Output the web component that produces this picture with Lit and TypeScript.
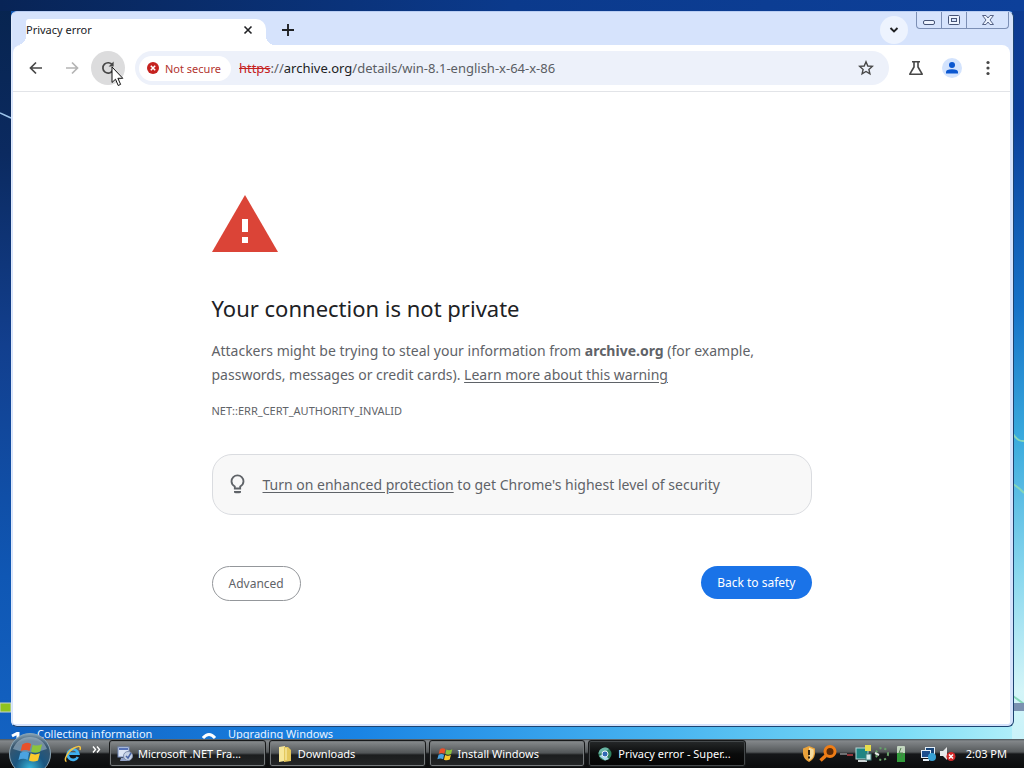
import { LitElement, html, svg, css } from "lit";
import { customElement } from "lit/decorators.js";

const flag = svg`
  <path d="M3 5 Q7 2 11 4.500 L9.600 11 Q6 9 1.500 11Z" fill="#e8502a"/>
  <path d="M12.500 5.200 Q16.500 7 21 4.800 L19.300 11.400 Q15 13.500 11 11.500Z" fill="#8cc43c"/>
  <path d="M1.200 12.500 Q5.500 10.500 9.200 12.600 L7.800 19 Q4 17 -.5 19Z" fill="#4ba3e0"/>
  <path d="M10.600 13 Q14.500 15 19 13 L17.300 19.500 Q13 21.500 9 19.600Z" fill="#fbc92c"/>`;

@customElement("browser-window")
export class BrowserWindow extends LitElement {
  static styles = css`
    :host {
      display: flex;
      flex-direction: column;
      min-height: 0;
      background: #d6e3fc;
      border: 1px solid #1c4371;
      border-top-color: #b9cdf2;
      border-left-color: #dfeafb;
      border-radius: 6px;
      padding: 0 3px 2px 1px;
      box-sizing: border-box;
      font-family: "Noto Sans", "Open Sans", sans-serif;
      color: #202124;
      position: relative;
    }
    button {
      font: inherit;
      color: inherit;
      border: 0;
      background: none;
      padding: 0;
      display: grid;
      place-items: center;
      flex: none;
    }
    svg { display: block; }
    .tabs { display: flex; height: 33px; flex: none; padding-left: 13px; }
    .tab {
      box-sizing: border-box;
      width: 240px;
      height: 26px;
      margin-top: 7px;
      background: #fff;
      border-radius: 3px 10px 0 0;
      display: flex;
      align-items: center;
      justify-content: space-between;
      padding: 0 10px 4px 0;
      font-size: 11px;
      line-height: 16px;
      position: relative;
    }
    .tab::before, .tab::after {
      content: "";
      position: absolute;
      bottom: 0;
      width: 9px;
      height: 9px;
    }
    .tab::before { right: 100%; background: radial-gradient(circle at 0 0, transparent 9px, #fff 9px); }
    .tab::after { left: 100%; background: radial-gradient(circle at 100% 0, transparent 9px, #fff 9px); }
    .close { width: 16px; height: 16px; }
    .plus { width: 24px; height: 24px; margin: 6px 0 0 10px; }
    .search { width: 28px; height: 28px; margin: 4px 8px 0 auto; border-radius: 50%; background: #edf3fe; }
    .caption {
      display: flex;
      height: 17px;
      box-sizing: border-box;
      border: 1px solid #7c8fb5;
      border-top: 0;
      border-radius: 0 0 4px 4px;
      margin-right: 1px;
    }
    .caption button { width: 25px; border-right: 1px solid #7c8fb5; }
    .caption button:last-child { width: 41px; border: 0; }
    .toolbar {
      display: flex;
      align-items: center;
      height: 46px;
      flex: none;
      background: #fff;
      border-bottom: 1px solid #e2e4e8;
      border-radius: 8px 8px 0 0;
      padding: 0 5px 0 6px;
      gap: 2px;
    }
    .icon { width: 34px; height: 34px; border-radius: 50%; color: #474747; }
    .off { color: #b4b4b4; }
    .hover { background: #dcdcdd; }
    .address {
      flex: 1;
      min-width: 0;
      height: 34px;
      margin: 0 8px 0 8px;
      border-radius: 17px;
      background: #edf1fa;
      display: flex;
      align-items: center;
      font-size: 13px;
    }
    .chip {
      height: 25px;
      margin-left: 4px;
      padding: 0 10px 0 8px;
      border-radius: 13px;
      background: #fff;
      color: #b3352f;
      display: flex;
      align-items: center;
      gap: 6px;
      font-size: 11px;
    }
    .url { flex: 1; margin-left: 8px; white-space: nowrap; overflow: hidden; color: #5a5d63; }
    .url s { color: #c5221f; }
    .url b { font-weight: 400; color: #202124; }
    .star { width: 34px; height: 34px; margin-right: 6px; }
    .page { flex: 1; min-height: 0; background: #fff; overflow: hidden; border-radius: 0 0 2px 2px; }
    .warning {
      box-sizing: border-box;
      width: min(600px, 100% - 48px);
      margin: 0 auto;
      padding-top: 97px;
      color: #5f6368;
      font-size: 14px;
      line-height: 24px;
    }
    .alert { margin: 6px 0 0; }
    h1 { margin: 41px 0 16px; font-size: 22px; line-height: 30px; font-weight: 400; color: #202124; }
    p { margin: 0; }
    a { color: inherit; text-underline-offset: 2px; }
    .code { margin-top: 12px; font-size: 11px; }
    .tip {
      box-sizing: border-box;
      min-height: 61px;
      margin-top: 31px;
      padding: 0 16px;
      border: 1px solid #dadce0;
      border-radius: 20px;
      background: #f8f8f8;
      display: flex;
      align-items: center;
      gap: 17px;
    }
    .actions { display: flex; justify-content: space-between; margin-top: 51px; font-size: 12px; }
    .actions button { height: 33px; padding: 0 16px; border-radius: 18px; }
    .actions .more { height: 35px; border: 1px solid #94979b; }
    .actions .safe { background: #1a73e8; color: #fff; }
    .cursor { position: absolute; left: 99px; top: 54px; }
  `;

  render() {
    return html`
      <div class="tabs">
        <div class="tab">
          <span>Privacy error</span>
          <button class="close" aria-label="Close tab">
            <svg width="10" height="10" viewBox="0 0 10 10"><path d="M1.500 1.500 8.500 8.500M8.500 1.500 1.500 8.500" stroke="#202124" stroke-width="1.600"/></svg>
          </button>
        </div>
        <button class="plus" aria-label="New tab">
          <svg width="14" height="14" viewBox="0 0 14 14"><path d="M7 1V13M1 7H13" stroke="#202124" stroke-width="1.900"/></svg>
        </button>
        <button class="search" aria-label="Search tabs">
          <svg width="10" height="8" viewBox="0 0 10 8"><path d="M1.500 2 5 5.500 8.500 2" fill="none" stroke="#202124" stroke-width="1.900"/></svg>
        </button>
        <div class="caption">
          <button aria-label="Minimize"><svg width="14" height="14" viewBox="0 0 14 14"><rect x="1.500" y="7.500" width="11" height="4" rx="1.500" fill="#edf3fe" stroke="#465476"/></svg></button>
          <button aria-label="Maximize"><svg width="14" height="14" viewBox="0 0 14 14"><rect x="1.500" y="2.500" width="11" height="9" rx="1" fill="#edf3fe" stroke="#465476"/><rect x="4.500" y="5.500" width="5" height="3" fill="#d6e3fc" stroke="#465476"/></svg></button>
          <button aria-label="Close"><svg width="14" height="12" viewBox="0 0 14 12"><path d="M1.500 1.500H5L7 4 9 1.500H12.500L9 6 12.500 10.500H9L7 8 5 10.500H1.500L5 6Z" fill="#edf3fe" stroke="#566386"/></svg></button>
        </div>
      </div>
      <div class="toolbar">
        <button class="icon" aria-label="Back"><svg width="16" height="16" viewBox="0 0 16 16"><path d="M14 8H3M8 2.500 2.500 8 8 13.500" fill="none" stroke="currentColor" stroke-width="1.700"/></svg></button>
        <button class="icon off" aria-label="Forward"><svg width="16" height="16" viewBox="0 0 16 16"><path d="M2 8H13M8 2.500 13.500 8 8 13.500" fill="none" stroke="currentColor" stroke-width="1.700"/></svg></button>
        <button class="icon hover" aria-label="Reload"><svg width="16" height="16" viewBox="0 0 16 16"><path d="M12.800 10.200A5.200 5.200 0 1 1 12.400 5" fill="none" stroke="currentColor" stroke-width="1.700"/><path d="M13.600 1.500V6.500H8.600Z" fill="currentColor"/></svg></button>
        <div class="address">
          <button class="chip">
            <svg width="12" height="12" viewBox="0 0 12 12"><circle cx="6" cy="6" r="6" fill="#c5221f"/><path d="M3.800 3.800 8.200 8.200M8.200 3.800 3.800 8.200" stroke="#fff" stroke-width="1.500"/></svg>
            Not secure
          </button>
          <span class="url"><s>https</s>://<b>archive.org</b>/details/win-8.1-english-x-64-x-86</span>
          <button class="star" aria-label="Bookmark this tab"><svg width="16" height="16" viewBox="0 0 16 16"><path d="M8 1.800 9.800 6 14.300 6.400 10.900 9.400 11.900 13.800 8 11.500 4.100 13.800 5.100 9.400 1.700 6.400 6.200 6Z" fill="none" stroke="#474747" stroke-width="1.400"/></svg></button>
        </div>
        <button class="icon" aria-label="Experiments"><svg width="16" height="16" viewBox="0 0 16 16"><path d="M4 1.800H12M6 2V7L1.800 14.200H14.200L10 7V2" fill="none" stroke="currentColor" stroke-width="1.600" stroke-linejoin="round"/></svg></button>
        <button class="icon" aria-label="Profile"><svg width="20" height="20" viewBox="0 0 20 20"><circle cx="10" cy="10" r="10" fill="#d3e3fd"/><circle cx="10" cy="7" r="3" fill="#0b57d0"/><path d="M4 15.500V14Q4 11.200 10 11.200T16 14V15.500Z" fill="#0b57d0"/></svg></button>
        <button class="icon" aria-label="Menu"><svg width="16" height="16" viewBox="0 0 16 16"><g fill="currentColor"><circle cx="8" cy="2.500" r="1.600"/><circle cx="8" cy="8" r="1.600"/><circle cx="8" cy="13.500" r="1.600"/></g></svg></button>
      </div>
      <main class="page">
        <div class="warning">
          <svg class="alert" width="66" height="57" viewBox="0 0 66 57"><path d="M33 0 66 57H0Z" fill="#db4437"/><path d="M30 24H36V37H30ZM30 42H36V48H30Z" fill="#fff"/></svg>
          <h1>Your connection is not private</h1>
          <p>Attackers might be trying to steal your information from <strong>archive.org</strong> (for example, passwords, messages or credit cards). <a href="#">Learn more about this warning</a></p>
          <p class="code">NET::ERR_CERT_AUTHORITY_INVALID</p>
          <div class="tip">
            <svg width="17" height="22" viewBox="0 0 17 22"><path d="M5.800 14.500V12.500Q2.500 10.600 2.500 7.300A6 6 0 0 1 14.500 7.300Q14.500 10.600 11.200 12.500V14.500Z" fill="none" stroke="#5f6368" stroke-width="1.800"/><path d="M5 17H12V18.200Q12 19.300 10 19.300H7Q5 19.300 5 18.200Z" fill="#5f6368"/></svg>
            <p><a href="#">Turn on enhanced protection</a> to get Chrome's highest level of security</p>
          </div>
          <div class="actions">
            <button class="more">Advanced</button>
            <button class="safe">Back to safety</button>
          </div>
        </div>
      </main>
      <svg class="cursor" width="14" height="21" viewBox="0 0 14 21"><path d="M1 1V16.500L4.500 13.200 7.200 19.500 9.600 18.400 6.900 12.300H11.800Z" fill="#fff" stroke="#111"/></svg>
    `;
  }
}

@customElement("task-bar")
export class TaskBar extends LitElement {
  static styles = css`
    :host {
      display: flex;
      align-items: center;
      height: 29px;
      background: linear-gradient(#4b5358 0, #83878a 2px, #55595b 13px, #151719 15px, #0b0c0d);
      color: #fff;
      font: 11px/16px "Noto Sans", "Open Sans", sans-serif;
      box-sizing: border-box;
      padding: 0 17px 0 8px;
    }
    button { font: inherit; color: inherit; border: 0; padding: 0; background: none; }
    svg { display: block; flex: none; }
    .start { height: 42px; margin-top: -7px; align-self: flex-start; position: relative; }
    .quick { display: flex; align-items: center; gap: 10px; margin: 0 8px 0 12px; }
    .chev { align-self: flex-start; }
    .tasks { display: flex; gap: 3px; flex: 1; min-width: 0; max-width: 637px; }
    .task {
      flex: 1;
      min-width: 0;
      height: 27px;
      box-sizing: border-box;
      display: flex;
      align-items: center;
      gap: 5px;
      padding-left: 7px;
      border: 1px solid #17191a;
      border-radius: 3px;
      box-shadow: inset 0 0 0 1px #75797b;
      background: linear-gradient(#888c8e, #515557 12px, #1b1d1e 14px, #242627);
      white-space: nowrap;
      overflow: hidden;
    }
    .active { padding-left: 8px; background: linear-gradient(#26292a, #0a0b0b 13px, #050505); box-shadow: inset 0 0 0 1px #44484a; }
    .tray { display: flex; align-items: center; gap: 2px; margin-left: auto; }
    .net { margin-left: 8px; }
    .battery { margin: 0 1px; }
    time { margin-left: 8px; white-space: nowrap; }
  `;

  render() {
    return html`
      <button class="start" aria-label="Start">
        <svg width="44" height="42" viewBox="0 0 44 42">
          <defs><radialGradient id="orb" cx=".5" cy=".85" r=".9"><stop offset="0" stop-color="#37b4d8"/><stop offset=".4" stop-color="#1b5680"/><stop offset=".75" stop-color="#38566e"/><stop offset="1" stop-color="#a4bccb"/></radialGradient></defs>
          <circle cx="22" cy="22" r="20.500" fill="url(#orb)" stroke="#8aa5b5"/>
          <path d="M5 17A18 18 0 0 1 39 17Q22 24 5 17Z" fill="#d5e4ef" opacity=".4"/>
          <g transform="translate(11 7) scale(1.1)">${flag}</g>
        </svg>
      </button>
      <div class="quick">
        <svg width="18" height="18" viewBox="0 0 18 18"><path d="M13.800 12A5.300 5.300 0 1 1 14.300 8.700H5" fill="none" stroke="#3fb0ee" stroke-width="2.700"/><path d="M2.500 16.500C-1 15.500 4 6 10 3S17 1.500 16 5" fill="none" stroke="#f5c542" stroke-width="1.500"/></svg>
        <svg class="chev" width="9" height="9" viewBox="0 0 9 9"><path d="M1 1.500 3.500 4.500 1 7.500M5 1.500 7.500 4.500 5 7.500" fill="none" stroke="#fff" stroke-width="1.400"/></svg>
      </div>
      <div class="tasks">
        <button class="task">
          <svg width="16" height="16" viewBox="0 0 16 16"><rect x="1" y="1" width="11" height="10" fill="#dbe4f4" stroke="#7187b8"/><rect x="2" y="2" width="9" height="2" fill="#5672b8"/><path d="M4 12H10V15H3Z" fill="#93a3c8"/><circle cx="11" cy="10" r="4.500" fill="#c6d2e6" stroke="#7f8fae"/><path d="M9 10 11 12 14 7" fill="none" stroke="#4b66a6" stroke-width="1.500"/></svg>
          <span>Microsoft .NET Fra...</span>
        </button>
        <button class="task">
          <svg width="16" height="16" viewBox="0 0 16 16"><path d="M2 1 8 0V15L2 16Z" fill="#f7e79a"/><path d="M7 1H11L14 4V15L7 16Z" fill="#e4c85e"/><path d="M9 2V14" stroke="#fff4b8"/></svg>
          <span>Downloads</span>
        </button>
        <button class="task">
          <svg width="16" height="16" viewBox="-1 1 23 21">${flag}</svg>
          <span>Install Windows</span>
        </button>
        <button class="task active">
          <svg width="16" height="16" viewBox="0 0 16 16"><circle cx="8" cy="8" r="6.500" fill="#2f7f5c"/><path d="M1.500 8A6.500 6.500 0 0 1 12 3L8 6Z" fill="#6ab5a5"/><path d="M2 10 8 14.500 12 13 7 8Z" fill="#a9d9ec"/><circle cx="8" cy="8" r="3" fill="#3169b5" stroke="#e7f4f8"/></svg>
          <span>Privacy error - Super...</span>
        </button>
      </div>
      <div class="tray">
        <svg width="16" height="16" viewBox="0 0 16 16"><path d="M8 0 14 2.500V8Q13 13.500 8 16 3 13.500 2 8V2.500Z" fill="#e9a23a"/><path d="M8 1.500V14.500Q12 12.500 12.700 8V3.500Z" fill="#f5dca0"/><path d="M8 4V9M8 10.500V12.500" stroke="#31230e" stroke-width="2"/></svg>
        <svg width="18" height="18" viewBox="0 0 18 18"><circle cx="11" cy="6.500" r="5" fill="#5d2c08" stroke="#ef7d16" stroke-width="3"/><path d="M7 10.500 1.500 15.500" stroke="#ef7d16" stroke-width="3.500"/></svg>
        <svg width="14" height="16" viewBox="0 0 14 16"><path d="M1 8H8" stroke="#8b8d8f" stroke-width="1.500"/><path d="M8 9H14" stroke="#91353a" stroke-width="2"/></svg>
        <svg width="17" height="18" viewBox="0 0 17 18"><rect x="1" y="3" width="12" height="11" fill="#1f8583" stroke="#b7d9d9"/><rect x="10" y="0" width="6" height="6" fill="#e7dd4c"/><path d="M3 15H12V17H3Z" fill="#ccd4d4"/><rect x="11" y="9" width="5" height="6" fill="#d9eeee" stroke="#42817f"/></svg>
        <svg width="16" height="16" viewBox="0 0 16 16"><circle cx="8" cy="8" r="6" fill="none" stroke="#68a36a" stroke-width="2" stroke-dasharray="2 3"/><path d="M1 7 5 9" stroke="#e4e9e4" stroke-width="2"/></svg>
        <svg class="battery" width="16" height="18" viewBox="0 0 16 18"><rect x="4" y="1" width="8" height="16" rx="1" fill="#c3d6c0"/><rect x="4" y="8" width="8" height="9" fill="#319b3a"/><path d="M8 3 6 8H10L8 13" fill="none" stroke="#4f7f4c"/></svg>
        <svg class="net" width="17" height="16" viewBox="0 0 17 16"><rect x="5.500" y="1.500" width="9" height="8" fill="#174478" stroke="#e3eef8"/><rect x="1.500" y="4.500" width="9" height="7" fill="#1d4f8e" stroke="#e3eef8"/><path d="M3 14H9" stroke="#e3eef8" stroke-width="2"/><circle cx="12" cy="11" r="4" fill="#38a2d5"/></svg>
        <svg width="17" height="16" viewBox="0 0 17 16"><path d="M1 5H4L8 1V14L4 10H1Z" fill="#e8e9ea"/><circle cx="12" cy="10.500" r="4.500" fill="#d32929"/><path d="M10 8.500 14 12.500M14 8.500 10 12.500" stroke="#fff" stroke-width="1.500"/></svg>
        <time>2:03 PM</time>
      </div>
    `;
  }
}

@customElement("app-root")
export class AppRoot extends LitElement {
  static styles = css`
    :host {
      display: flex;
      flex-direction: column;
      height: 100vh;
      overflow: hidden;
      position: relative;
      background:
        linear-gradient(90deg, #082456, #0b3a8c 50%, #0d409a) 0 0 / 100% 11px no-repeat,
        linear-gradient(#07244f 0, #0b2a60 20%, #123f8e 45%, #0f57b4 75%, #1464c4 100%) 0 0 / 11px 100% no-repeat,
        linear-gradient(#0d3a90 0, #0c3f9a 15%, #1672c8 40%, #3aaadd 57%, #8ad8ee 75%, #d4f5f8 90%, #c2f0fa 100%) 100% 0 / 12px 100% no-repeat,
        linear-gradient(90deg, #1060c0, #1a84e4 35%, #48b4f0 65%, #7cdcf6 88%, #b4f0fa) 0 100% / 100% 60px no-repeat,
        #0f57b4;
    }
    .backdrop { position: absolute; inset: 0; width: 100%; height: 100%; }
    browser-window { flex: 1; margin: 11px 10px 0 11px; z-index: 1; }
    .installer {
      display: flex;
      height: 12px;
      flex: none;
      overflow: hidden;
      padding-left: 11px;
      color: #e8f3ff;
      font: 11px/14px "Noto Sans", "Open Sans", sans-serif;
      position: relative;
    }
    .step { display: flex; gap: 4px; width: 191px; white-space: nowrap; }
    .step svg { margin-top: 5px; flex: none; }
    task-bar { position: relative; z-index: 2; flex: none; }
  `;

  render() {
    return html`
      <svg class="backdrop" viewBox="0 0 1024 768" preserveAspectRatio="none" aria-hidden="true">
        <path d="M0 113 11 118" stroke="#9cc4ea" stroke-width="1.500"/>
        <path d="M1013 434Q1018 442 1024 441M1013 484Q1019 488 1024 493M1013 696 1024 704" fill="none" stroke="#86d6b8" stroke-width="2"/>
        <path d="M0 703H11V712H0Z" fill="#8fc320" stroke="#c5d3cf"/>
        <path d="M1013 703H1024V711H1013Z" fill="#7b91b1"/>
      </svg>
      <browser-window></browser-window>
      <div class="installer">
        <div class="step"><svg width="22" height="10" viewBox="0 0 22 10"><path d="M1 4 7 1V9" fill="none" stroke="#fff" stroke-width="3"/></svg><span>Collecting information</span></div>
        <div class="step"><svg width="22" height="10" viewBox="0 0 22 10"><path d="M1 6Q7-1 13 6" fill="none" stroke="#fff" stroke-width="3"/></svg><span>Upgrading Windows</span></div>
      </div>
      <task-bar></task-bar>
    `;
  }
}
